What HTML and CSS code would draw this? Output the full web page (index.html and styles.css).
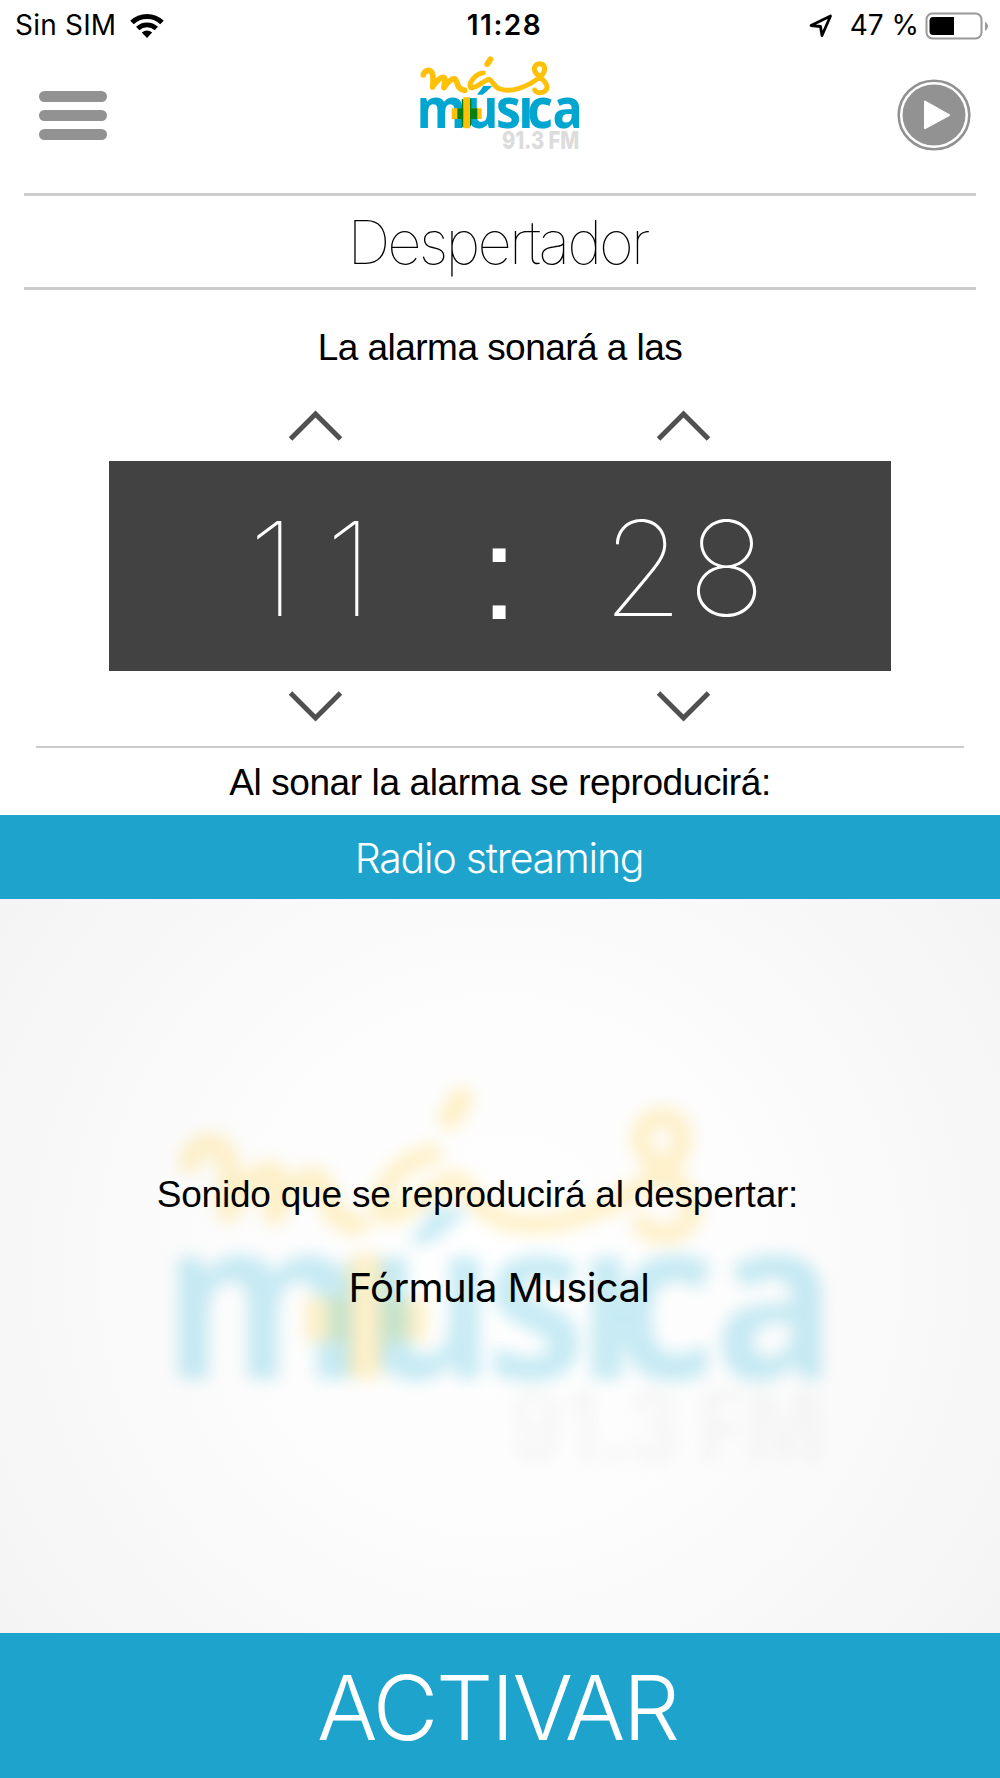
FILE: index.html
```html
<!DOCTYPE html>
<html lang="es">
<head>
<meta charset="utf-8">
<title>Despertador</title>
<link rel="stylesheet" href="styles.css">
</head>
<body>
<svg class="defs" aria-hidden="true">
  <symbol id="logo" viewBox="0 0 600 360">
    <g fill="none" stroke="#ffc107" stroke-linecap="round" stroke-linejoin="round">
      <path stroke-width="17" d="M70 105C72 92 88 86 96 98C102 112 98 132 98 141C106 126 124 108 132 113C139 118 131 134 132 143C142 126 158 112 166 118C174 128 170 148 194 151"/>
      <path stroke-width="15" d="M250 99C228 100 204 128 212 143C226 148 250 122 266 118C276 118 280 140 300 147C330 157 366 144 392 130C412 118 436 104 434 84C431 67 408 67 403 84C400 106 440 118 441 140C440 162 408 162 404 150"/>
      <path stroke-width="18" d="M262 72L271 58"/>
    </g>
    <text class="logo-name" transform="scale(.92 1)" x="54 214 313 386 415 497" y="265">músıca</text>
    <path fill="#ffc107" d="M155 205H245V237H155ZM190 172H210V265H190Z"/>
    <path fill="#078012" d="M172 205H190V237H172ZM210 205H232V237H210ZM185 178H190V262H185ZM210 178H214V252L210 262Z"/>
    <text class="logo-freq" x="306" y="326" textLength="232" lengthAdjust="spacingAndGlyphs">91.3 FM</text>
  </symbol>
</svg>
<div class="screen">
  <div class="status">
    <div class="status-left"><span class="carrier">Sin SIM</span>
      <svg width="34" height="26" viewBox="0 0 34 26"><g fill="none" stroke="#000"><path stroke-width="5" d="M2 9.5A21.5 21.5 0 0 1 32 9.500"/><path stroke-width="4.800" d="M7.700 15.500A13.500 13.500 0 0 1 26.300 15.500"/></g><path d="M17 25L11.800 19.500Q17 15.300 22.200 19.500Z"/></svg>
    </div>
    <span class="clock">11:28</span>
    <div class="status-right">
      <svg width="24" height="24" viewBox="0 0 24 24"><path d="M2 11.500L21.500 2L13 21.500L11.500 12.500Z" fill="none" stroke="#000" stroke-width="2.800" stroke-linejoin="round"/></svg>
      <span class="percent">47 %</span>
      <svg class="battery" width="64" height="28" viewBox="0 0 64 28"><rect x="1.500" y="1.500" width="55" height="25" rx="6" fill="none" stroke="#999" stroke-width="2"/><path d="M8 5H29V23H8Q4.500 23 4.500 19V9Q4.500 5 8 5Z"/><path d="M60 9.500Q66 14 60 19Z" fill="#999"/></svg>
    </div>
  </div>
  <header class="header">
    <div class="menu"><i></i><i></i><i></i></div>
    <svg class="brand"><use href="#logo"/></svg>
    <svg class="play" width="74" height="72" viewBox="0 0 74 72"><ellipse cx="37" cy="36" rx="35.300" ry="34.300" fill="#fff" stroke="#929292" stroke-width="2.600"/><ellipse cx="37" cy="36" rx="31.500" ry="30.500" fill="#929292"/><path d="M28 22.500L52 36L28 49Z" fill="#fff" stroke="#fff" stroke-width="2" stroke-linejoin="round"/></svg>
  </header>
  <h1 class="title"><span>Despertador</span></h1>
  <p class="lead"><span>La alarma sonará a las</span></p>
  <div class="arrows up">
    <svg width="54" height="32" viewBox="0 0 54 32"><path d="M1.500 29L26.500 4L51.500 29"/></svg>
    <svg width="54" height="32" viewBox="0 0 54 32"><path d="M1.500 29L26.500 4L51.500 29"/></svg>
  </div>
  <div class="time"><span class="hours">11</span><span class="colon">:</span><span class="minutes">28</span></div>
  <div class="arrows down">
    <svg width="54" height="32" viewBox="0 0 54 32"><path d="M1.500 3L26.500 28L51.500 3"/></svg>
    <svg width="54" height="32" viewBox="0 0 54 32"><path d="M1.500 3L26.500 28L51.500 3"/></svg>
  </div>
  <p class="source"><span>Al sonar la alarma se reproducirá:</span></p>
  <div class="bar"><span>Radio streaming</span></div>
  <main class="sound">
    <svg class="watermark"><use href="#logo"/></svg>
    <p class="sound-label"><span>Sonido que se reproducirá al despertar:</span></p>
    <p class="sound-name"><span>Fórmula Musical</span></p>
  </main>
  <div class="activate"><span>ACTIVAR</span></div>
</div>
</body>
</html>
```
FILE: styles.css
```css
* { box-sizing: border-box; }
body { margin: 0; background: #fff; color: #000; font-family: "Liberation Sans", Arial, sans-serif; }
p, h1 { margin: 0; font-weight: 400; }
svg { display: block; flex: none; }
.defs { width: 0; height: 0; position: absolute; }
.logo-name { font: 700 164px "Open Sans", sans-serif; fill: #00a5d0; }
.logo-freq { font: 800 74px "Inter", sans-serif; fill: #dcdcdc; }
.screen { width: 1000px; height: 1778px; display: flex; flex-direction: column; overflow: hidden; }
.screen span { white-space: nowrap; }
.status { height: 50px; display: grid; grid-template-columns: 1fr auto 1fr; align-items: center; padding: 0 11px 0 15px; font: 400 28px/51px "Inter", sans-serif; }
.status-left, .status-right { display: flex; align-items: center; }
.status-left { gap: 14px; }
.carrier { letter-spacing: .2px; }
.status-right { justify-content: flex-end; }
.percent { margin: 0 6px 0 17px; }
.clock { font-weight: 600; letter-spacing: 1.5px; padding-left: 5px; }
.header { height: 143px; display: flex; justify-content: space-between; padding: 0 29px 0 39px; }
.menu { width: 68px; display: flex; flex-direction: column; gap: 8px; padding-top: 41px; }
.menu i { height: 11px; border-radius: 6px; background: #929292; }
.brand { width: 200px; height: 120px; margin-top: -10px; margin-left: -5px; }
.play { margin-top: 29px; }
.title { height: 97px; margin: 0 24px; border: solid #ccc; border-width: 3px 0; text-align: center; font: 100 60px/93px "Inter", sans-serif; letter-spacing: -2.9px; padding-right: 5px; }
.lead { height: 120px; text-align: center; font-size: 37px; letter-spacing: -.54px; line-height: 116px; }
.arrows { display: flex; gap: 314px; padding-left: 289px; }
.arrows path { fill: none; stroke: #505050; stroke-width: 5; }
.up { height: 51px; }
.time { width: 782px; height: 210px; margin-left: 109px; background: #424242; color: #fff; display: grid; grid-template-columns: 360px 60px 362px; text-align: center; font: 100 131px/215px "Inter", sans-serif; }
.hours { letter-spacing: 29px; padding-left: 72px; }
.minutes { letter-spacing: 4px; padding-right: 48px; }
.colon { font: 400 134px/223px "Liberation Sans", sans-serif; }
.down { height: 75px; padding-top: 19px; }
.source { height: 69px; margin: 0 36px; border-top: 2px solid #ccc; text-align: center; font-size: 37px; letter-spacing: -.4px; line-height: 70px; }
.bar { height: 84px; background: #1ea4cc; color: #fff; text-align: center; font: 300 41px/86px "Inter", sans-serif; letter-spacing: -1.2px; padding-right: 2px; }
.sound { position: relative; height: 734px; background: radial-gradient(circle at 50% 50%, #fff 0, #fcfcfc 45%, #f4f4f4 100%); text-align: center; }
.watermark { position: absolute; left: 95px; top: 121px; width: 812px; height: 488px; opacity: .21; filter: blur(8px); }
.sound-label { position: relative; padding: 276px 45px 0 0; font-size: 37px; letter-spacing: -.22px; line-height: 40px; }
.sound-name { position: relative; padding: 48px 2px 0 0; font: 400 40px/50px "Inter", sans-serif; letter-spacing: -.6px; }
.activate { height: 145px; background: #1ea4cc; color: #fff; text-align: center; font: 300 90px/149px "Inter", sans-serif; letter-spacing: -2.2px; padding-right: 5px; }
```
